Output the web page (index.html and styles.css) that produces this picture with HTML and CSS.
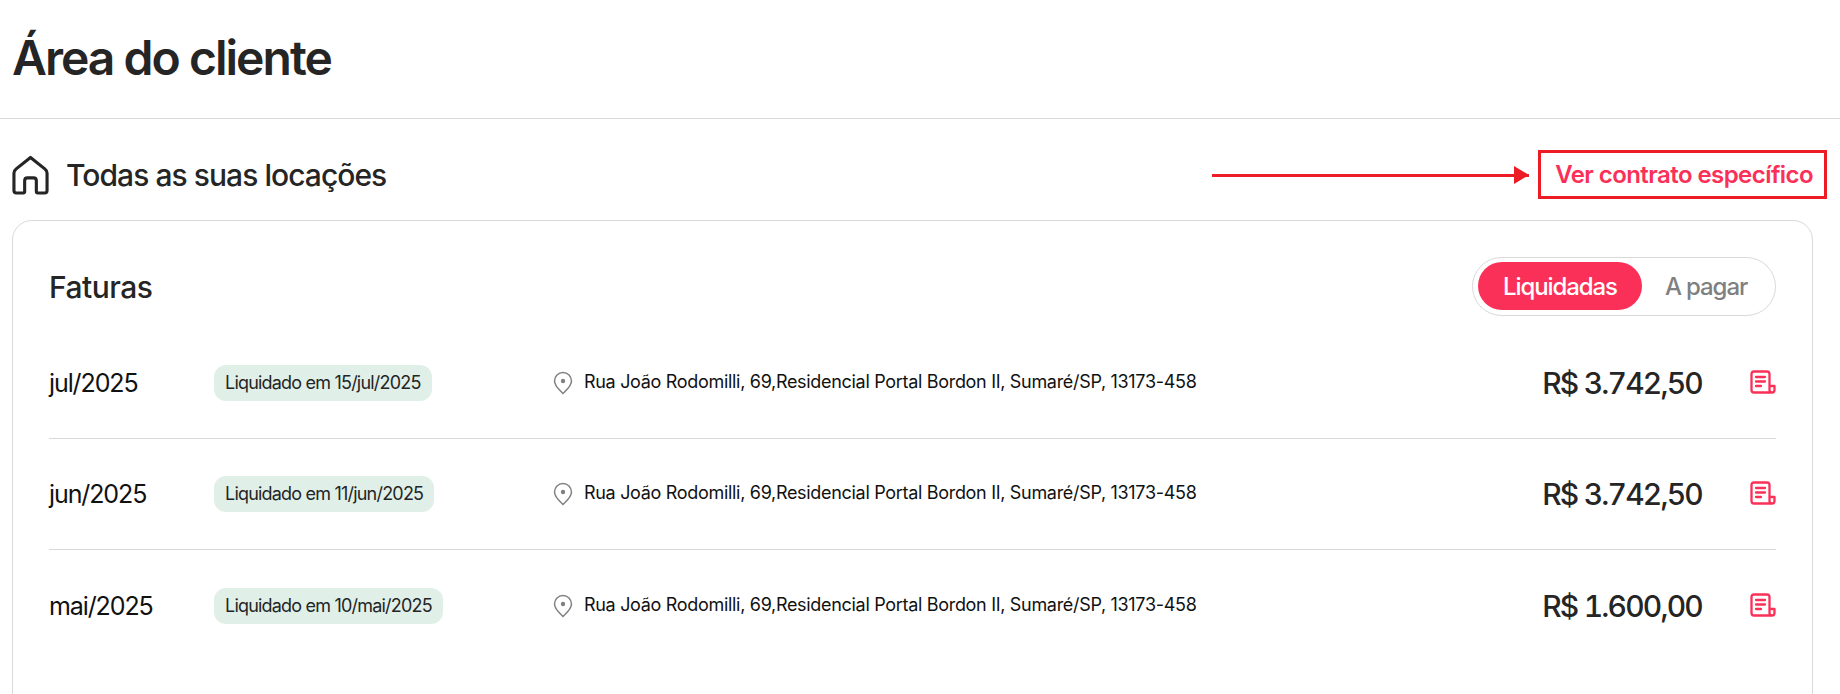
FILE: index.html
```html
<!DOCTYPE html>
<html lang="pt-BR">
<head>
    <meta charset="UTF-8">
    <meta name="viewport" content="width=device-width, initial-scale=1.0">
    <link rel="stylesheet" href="styles.css">
    <title>Área do cliente</title>
</head>
<body>
    <header class="page-header">
        <h1>Área do cliente</h1>
    </header>

    <main class="content">
        <div class="section-head">
            <div class="section-title">
                <svg class="icon-home" viewBox="0 0 38 40" fill="none" stroke="#252525" stroke-width="3.200" stroke-linejoin="round">
                    <path d="M19 2 L34 14 Q36 15.500 36 18 V36 Q36 38.500 33.500 38.500 H26.500 Q25 38.500 25 37 V26 Q25 23 22 23 H16 Q13 23 13 26 V37 Q13 38.500 11.500 38.500 H4.500 Q2 38.500 2 36 V18 Q2 15.500 4 14 Z"/>
                </svg>
                <h2>Todas as suas locações</h2>
            </div>
            <a class="contract-link" href="#">Ver contrato específico</a>

            <!-- red annotation drawn over the page -->
            <div class="note-arrow"></div>
            <div class="note-box"></div>
        </div>

        <section class="card">
            <div class="card-head">
                <h3>Faturas</h3>
                <div class="toggle">
                    <button class="toggle-btn active" type="button">Liquidadas</button>
                    <button class="toggle-btn" type="button">A pagar</button>
                </div>
            </div>

            <div class="invoice">
                <div class="month">jul/2025</div>
                <div class="status"><span class="badge">Liquidado em 15/jul/2025</span></div>
                <div class="address">
                    <svg class="icon-pin" viewBox="0 0 20 24" fill="none" stroke="#808080" stroke-width="1.500">
                        <path d="M10 22.500 C6 18.500 1.500 15 1.500 10 A8.500 8.500 0 0 1 18.500 10 C18.500 15 14 18.500 10 22.500 Z"/>
                        <circle cx="10" cy="10" r="2.200" fill="#808080" stroke="none"/>
                    </svg>
                    <span>Rua João Rodomilli, 69,Residencial Portal Bordon II, Sumaré/SP, 13173-458</span>
                </div>
                <div class="amount">R$ 3.742,50</div>
                <svg class="icon-doc" viewBox="0 0 26 24" fill="none" stroke="#fb3058" stroke-width="2.300" stroke-linecap="round" stroke-linejoin="round">
                    <path d="M24.500 16 H19.500 V4 Q19.500 1.500 17 1.500 H4 Q1.500 1.500 1.500 4 V20 Q1.500 22.500 4 22.500 H22 Q24.500 22.500 24.500 20 Z M19.500 16 V20 Q19.500 22.500 22 22.500"/>
                    <path d="M6 7 H15 M6 11.500 H15 M6 16 H11"/>
                </svg>
            </div>

            <div class="invoice">
                <div class="month">jun/2025</div>
                <div class="status"><span class="badge">Liquidado em 11/jun/2025</span></div>
                <div class="address">
                    <svg class="icon-pin" viewBox="0 0 20 24" fill="none" stroke="#808080" stroke-width="1.500">
                        <path d="M10 22.500 C6 18.500 1.500 15 1.500 10 A8.500 8.500 0 0 1 18.500 10 C18.500 15 14 18.500 10 22.500 Z"/>
                        <circle cx="10" cy="10" r="2.200" fill="#808080" stroke="none"/>
                    </svg>
                    <span>Rua João Rodomilli, 69,Residencial Portal Bordon II, Sumaré/SP, 13173-458</span>
                </div>
                <div class="amount">R$ 3.742,50</div>
                <svg class="icon-doc" viewBox="0 0 26 24" fill="none" stroke="#fb3058" stroke-width="2.300" stroke-linecap="round" stroke-linejoin="round">
                    <path d="M24.500 16 H19.500 V4 Q19.500 1.500 17 1.500 H4 Q1.500 1.500 1.500 4 V20 Q1.500 22.500 4 22.500 H22 Q24.500 22.500 24.500 20 Z M19.500 16 V20 Q19.500 22.500 22 22.500"/>
                    <path d="M6 7 H15 M6 11.500 H15 M6 16 H11"/>
                </svg>
            </div>

            <div class="invoice">
                <div class="month">mai/2025</div>
                <div class="status"><span class="badge">Liquidado em 10/mai/2025</span></div>
                <div class="address">
                    <svg class="icon-pin" viewBox="0 0 20 24" fill="none" stroke="#808080" stroke-width="1.500">
                        <path d="M10 22.500 C6 18.500 1.500 15 1.500 10 A8.500 8.500 0 0 1 18.500 10 C18.500 15 14 18.500 10 22.500 Z"/>
                        <circle cx="10" cy="10" r="2.200" fill="#808080" stroke="none"/>
                    </svg>
                    <span>Rua João Rodomilli, 69,Residencial Portal Bordon II, Sumaré/SP, 13173-458</span>
                </div>
                <div class="amount">R$ 1.600,00</div>
                <svg class="icon-doc" viewBox="0 0 26 24" fill="none" stroke="#fb3058" stroke-width="2.300" stroke-linecap="round" stroke-linejoin="round">
                    <path d="M24.500 16 H19.500 V4 Q19.500 1.500 17 1.500 H4 Q1.500 1.500 1.500 4 V20 Q1.500 22.500 4 22.500 H22 Q24.500 22.500 24.500 20 Z M19.500 16 V20 Q19.500 22.500 22 22.500"/>
                    <path d="M6 7 H15 M6 11.500 H15 M6 16 H11"/>
                </svg>
            </div>
        </section>
    </main>
</body>
</html>
```

FILE: styles.css
```css
* {
    box-sizing: border-box;
}

html, body {
    height: 100%;
    overflow: hidden;
}

body {
    margin: 0;
    background-color: #fff;
    color: #252525;
    font-family: Inter, "Noto Sans", sans-serif;
}

h1, h2, h3 {
    margin: 0;
}

.page-header {
    height: 119px;
    padding-left: 12px;
    padding-bottom: 4px;
    border-bottom: 1px solid #d9d9d9;
    display: flex;
    align-items: center;
}

h1 {
    font-size: 48px;
    font-weight: 600;
    letter-spacing: -1.970px;
}

.content {
    padding: 0 27px 0 12px;
}

.section-head {
    position: relative;
    height: 101px;
    padding-top: 10px;
    display: flex;
    align-items: center;
    justify-content: space-between;
}

.section-title {
    display: flex;
    align-items: center;
    gap: 17px;
}

.icon-home {
    width: 37px;
    height: 40px;
}

h2 {
    font-size: 30px;
    font-weight: 500;
    letter-spacing: -0.950px;
}

.contract-link {
    color: #fb3058;
    font-size: 24px;
    font-weight: 600;
    letter-spacing: -0.560px;
    text-decoration: none;
}

.note-box {
    position: absolute;
    left: 1526px;
    top: 31px;
    width: 289px;
    height: 49px;
    border: 3px solid #ed1c24;
}

.note-arrow {
    position: absolute;
    left: 1200px;
    top: 55px;
    width: 317px;
    height: 3px;
    background-color: #ed1c24;
}

.note-arrow::after {
    content: "";
    position: absolute;
    right: 0;
    top: -8px;
    border-left: 15px solid #ed1c24;
    border-top: 9px solid transparent;
    border-bottom: 9px solid transparent;
}

.card {
    border: 1px solid #d9d9d9;
    border-radius: 20px;
    padding: 36px 36px 0 36px;
    height: 600px;
}

.card-head {
    display: flex;
    align-items: center;
    justify-content: space-between;
    margin-bottom: 12px;
}

h3 {
    font-size: 30px;
    font-weight: 500;
    letter-spacing: -0.500px;
}

.toggle {
    width: 304px;
    height: 59px;
    padding: 4px 5px 5px;
    border: 1px solid #d9d9d9;
    border-radius: 30px;
    display: flex;
    align-items: stretch;
}

.toggle-btn {
    flex: 1;
    border: none;
    background: none;
    color: #808080;
    font-family: inherit;
    font-size: 24px;
    font-weight: 500;
    letter-spacing: -1.100px;
    padding: 0;
}

.toggle-btn.active {
    flex: 0 0 164px;
    background-color: #fb3058;
    color: #fff;
    border-radius: 24px;
}

.invoice {
    height: 111px;
    display: flex;
    align-items: center;
    border-bottom: 1px solid #d9d9d9;
}

.invoice:last-child {
    border-bottom: none;
}

.month {
    width: 165px;
    font-size: 25px;
    color: #111;
    letter-spacing: -1.100px;
}

.status {
    width: 339px;
}

.badge {
    display: inline-block;
    height: 36px;
    line-height: 36px;
    padding: 0 11px;
    border-radius: 12px;
    background-color: #e0f0e9;
    font-size: 18px;
    letter-spacing: -0.800px;
    white-space: nowrap;
}

.address {
    flex: 1;
    display: flex;
    align-items: center;
    gap: 11px;
    font-size: 18px;
    color: #111;
    letter-spacing: -0.310px;
}

.address span {
    margin-bottom: 3px;
}

.icon-pin {
    width: 20px;
    height: 24px;
}

.amount {
    margin-right: 48px;
    font-size: 30px;
    font-weight: 500;
    font-variant-numeric: tabular-nums;
    letter-spacing: -1.800px;
    white-space: nowrap;
}

.icon-doc {
    width: 26px;
    height: 24px;
    margin-bottom: 2px;
}
```
